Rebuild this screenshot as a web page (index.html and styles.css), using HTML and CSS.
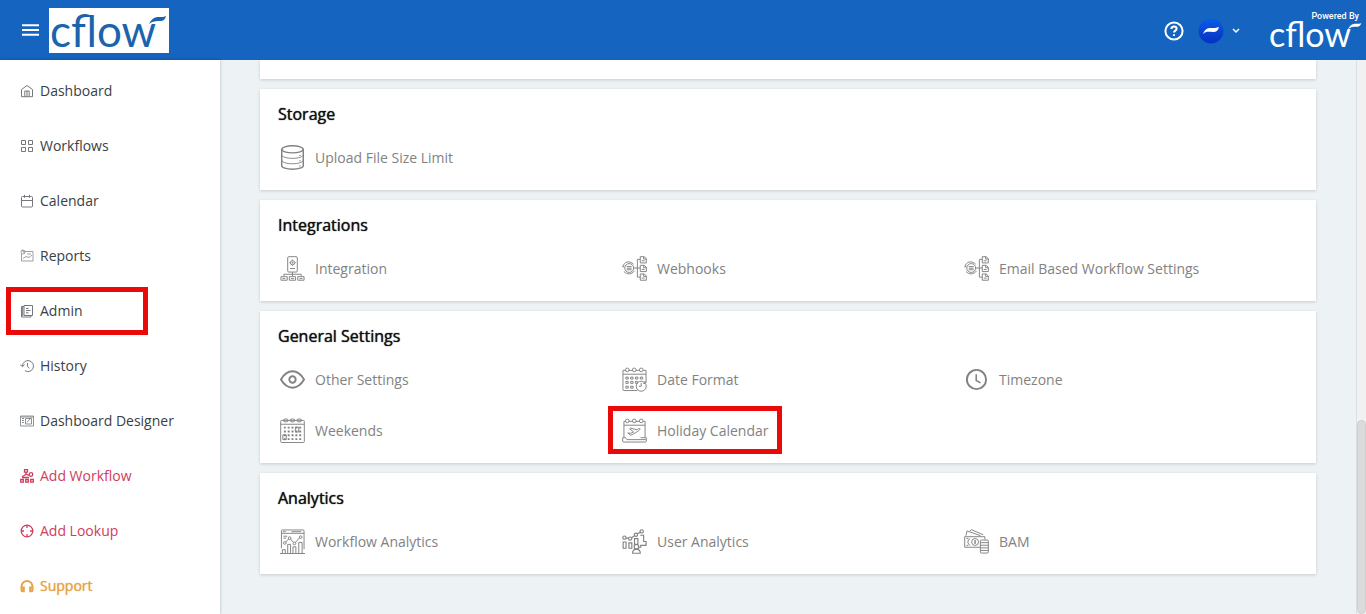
FILE: index.html
```html
<!DOCTYPE html>
<html lang="en">
<head>
<meta charset="utf-8">
<title>Cflow - Admin</title>
<meta name="viewport" content="width=device-width, initial-scale=1">
<link rel="stylesheet" href="styles.css">
</head>
<body>
<header class="topbar">
  <button class="icon-button" type="button" aria-label="Toggle menu">
    <svg class="menu-icon" viewBox="0 0 18 14"><path d="M0 2h18M0 7h18M0 12h18"/></svg>
  </button>
  <a class="brand" href="#"><span class="brand-word">cflow</span><svg class="brand-swoosh" viewBox="0 0 18 10"><path d="M0 9C3 3 6 2 10 2s5 0 7-1c-1 4-3 5-6 5-4 0-7 0-11 3z"/></svg></a>
  <div class="tools">
    <button class="icon-button" type="button" aria-label="Help">
      <svg class="help-icon" viewBox="0 0 20 20"><circle cx="10" cy="10" r="8.6"/><path d="M7.4 8c0-1.700 1.100-2.600 2.600-2.600s2.600.9 2.600 2.300c0 1.900-2.600 1.900-2.600 3.900M10 13.200v1.700"/></svg>
    </button>
    <button class="icon-button account" type="button" aria-label="Account">
      <svg class="avatar" viewBox="0 0 26 26"><defs><linearGradient id="disc" x1="0" y1="0" x2="0" y2="1"><stop offset="0" stop-color="#0a5ce8"/><stop offset="1" stop-color="#0530c0"/></linearGradient></defs><circle cx="13" cy="13" r="12.500" fill="url(#disc)"/><path fill="#fff" d="M5 16c2-5 4-6 8-6 3 0 5 0 8-1-1 4-3 5-6 5-4 0-7-1-10 2z"/></svg>
      <svg class="chevron" viewBox="0 0 8 6"><path stroke-width="1.500" d="M1 1l3 3 3-3"/></svg>
    </button>
  </div>
  <a class="powered" href="#"><span class="powered-label">Powered By</span><span class="powered-word">cflow</span><svg class="powered-swoosh" viewBox="0 0 18 10"><path d="M0 9C3 3 6 2 10 2s5 0 7-1c-1 4-3 5-6 5-4 0-7 0-11 3z"/></svg></a>
</header>

<div class="shell">
  <nav class="sidebar" aria-label="Main">
    <a class="nav-item" href="#"><svg class="nav-icon" viewBox="0 0 14 14"><path d="M1.500 5.500L7 1.500l5.500 4v7.200h-11zM4.800 12.700V7h4.400v5.700M7 7v5.700"/></svg>Dashboard</a>
    <a class="nav-item" href="#"><svg class="nav-icon" viewBox="0 0 14 14"><path d="M1.500 1.500h4v4h-4zM8.500 1.500h4v4h-4zM1.500 8.500h4v4h-4zM8.500 8.500h4v4h-4z"/></svg>Workflows</a>
    <a class="nav-item" href="#"><svg class="nav-icon" viewBox="0 0 14 14"><rect x="1.500" y="2.500" width="11" height="10.500" rx="1"/><path d="M1.500 6.500h11M4.500 .8v3M9.500 .8v3"/></svg>Calendar</a>
    <a class="nav-item" href="#"><svg class="nav-icon" viewBox="0 0 14 14"><g stroke-width=".7"><path d="M5 2.500h8v9.500H1.500V5"/><circle cx="3" cy="3" r="2"/><path d="M3 1v2h2M3 9.500l3-2 3 1 3-2.500M7 5h4"/></g></svg>Reports</a>
    <a class="nav-item marked" href="#"><svg class="nav-icon" viewBox="0 0 14 14"><path d="M4 1.500h8.500v10H4zM4 2.500H1.500v10.500h9.500v-1.500M2.700 3v9M6 4.500h2.500M6 6.500h4.500M6 8.800h2.500"/></svg>Admin</a>
    <a class="nav-item" href="#"><svg class="nav-icon" viewBox="0 0 14 14"><path d="M2.500 7A5.500 5.500 0 1 1 5 11.700M.3 5.800l2.200 1.800L4.600 5.600M7.500 4v3.400l2 2"/></svg>History</a>
    <a class="nav-item" href="#"><svg class="nav-icon" viewBox="0 0 14 14"><g stroke-width=".8"><path d="M.5 2h13v10H.5zM5.500 4.500h6v5.500h-6zM2 4.500h2M2 6.500h2M2 8.500h2M7 8.500l4-5M.5 3h13"/></g></svg>Dashboard Designer</a>
    <a class="nav-item add" href="#"><svg class="nav-icon" viewBox="0 0 14 14"><g stroke-width="1.300"><path d="M4.500.7h3v2.500h-3zM6 3.200v2L2 8M6 5l3 1.500"/><circle cx="11" cy="5.500" r="1.800"/><path d="M.7 10.500h2.600v2.600H.7zM5.700 10.500h2.600v2.600H5.700zM10.700 10.500h2.600v2.600h-2.600zM2 8.500h7"/></g></svg>Add Workflow</a>
    <a class="nav-item add" href="#"><svg class="nav-icon" viewBox="0 0 14 14"><g stroke-width="1.300"><circle cx="7" cy="7" r="5.800"/><path d="M7 1v3M7 10v3M1 7h3M10 7h3"/></g></svg>Add Lookup</a>
    <a class="nav-item support" href="#"><svg class="nav-icon heavy" viewBox="0 0 14 14"><path d="M1.500 11V7.500a5.500 5.500 0 0 1 11 0V11M1.500 8.500h2.300v3.800H2.500a1 1 0 0 1-1-1zM12.500 8.500h-2.300v3.800h1.300a1 1 0 0 0 1-1z"/></svg>Support</a>
  </nav>

  <main class="content">
    <section class="card card-tail" aria-hidden="true"></section>

    <section class="card">
      <h2 class="card-title">Storage</h2>
      <div class="options">
        <a class="option" href="#"><svg class="option-icon" viewBox="0 0 26 26"><g stroke-width="1.500"><ellipse cx="13" cy="4.500" rx="11.200" ry="3.700"/><path d="M1.800 4.500v17c0 2 5 3.700 11.200 3.700s11.200-1.700 11.200-3.700v-17"/></g><path d="M1.800 10.200c0 2 5 3.700 11.200 3.700s11.200-1.700 11.200-3.700M1.800 15.800c0 2 5 3.700 11.200 3.700s11.200-1.700 11.200-3.700M20 10.800h1.500M20 16.500h1.500M20 21.800h1.500"/></svg>Upload File Size Limit</a>
      </div>
    </section>

    <section class="card">
      <h2 class="card-title">Integrations</h2>
      <div class="options">
        <a class="option" href="#"><svg class="option-icon" viewBox="0 0 26 26"><rect x="8" y=".7" width="10" height="16" rx="1.200"/><circle cx="13" cy="7" r="2.200"/><circle cx="13" cy="7" r=".6"/><path d="M13 3.700v1M13 9.300v1M9.700 7h1M15.300 7h1M10.500 13h5M13 16.700v3M4 21v-2h18v2M13 19v2M1 21.500h6.500v3.700H1zM9.700 21.500h6.500v3.700H9.700zM18.500 21.500H25v3.700h-6.500zM2.500 23.500h3M11.500 23.500h3M20.300 23.500h3"/></svg>Integration</a>
        <a class="option" href="#"><svg class="option-icon" viewBox="0 0 26 26"><circle cx="7.500" cy="12.500" r="4.600"/><path d="M.8 11.500C2 5.500 8 4.500 12 8.500M2 16c3 3.500 8 3.500 11-.5M.8 11.500l1.700-1M5 11h5M5 12.700h5M5 14.300h5M12 12.500h7M19 3.500h-3v18.500h3"/><path d="M19 .7h4l2.300 2v4.500H19zM19 9.700h4l2.300 2v4.500H19zM19 18.700h4l2.300 2v4.500H19zM22.500.7v2.500h2.800M22.500 9.700v2.500h2.800M22.500 18.700v2.500h2.800M20.500 5h3M20.500 14h3M20.500 23h3"/></svg>Webhooks</a>
        <a class="option" href="#"><svg class="option-icon" viewBox="0 0 26 26"><circle cx="7.500" cy="12.500" r="4.600"/><path d="M.8 11.500C2 5.500 8 4.500 12 8.500M2 16c3 3.500 8 3.500 11-.5M.8 11.500l1.700-1M5 11h5M5 12.700h5M5 14.300h5M12 12.500h7M19 3.500h-3v18.500h3"/><path d="M19 .7h4l2.300 2v4.500H19zM19 9.700h4l2.300 2v4.500H19zM19 18.700h4l2.300 2v4.500H19zM22.500.7v2.500h2.800M22.500 9.700v2.500h2.800M22.500 18.700v2.500h2.800M20.500 5h3M20.500 14h3M20.500 23h3"/></svg>Email Based Workflow Settings</a>
      </div>
    </section>

    <section class="card">
      <h2 class="card-title">General Settings</h2>
      <div class="options">
        <a class="option" href="#"><svg class="option-icon bold" viewBox="0 0 26 26"><path d="M1 13C4.500 7 8.500 4.500 13 4.500S21.500 7 25 13c-3.500 6-7.500 8.500-12 8.500S4.500 19 1 13z"/><circle cx="13" cy="13" r="3.300"/></svg>Other Settings</a>
        <a class="option" href="#"><svg class="option-icon" viewBox="0 0 26 26"><path d="M16 24.500H2a1 1 0 0 1-1-1V3.500h3M7 3.500h4M14.500 3.500h4M22 3.500h3v13M1 7.500h24"/><circle cx="5.500" cy="3" r="1.900"/><circle cx="12.700" cy="3" r="1.900"/><circle cx="20" cy="3" r="1.900"/><path d="M4 10.500h2.500v2H4zM9 10.500h2.500v2H9zM14 10.500h2.500v2H14zM19 10.500h2.500v2H19zM4 15h2.500v2H4zM9 15h2.500v2H9zM4 20h2.500v2H4zM9 20h2.500v2H9zM14 15h2v2h-2z"/><circle cx="20" cy="20" r="5.200"/><path d="M20 16.500V20h-2.500M24 14.500v2.500h-2"/></svg>Date Format</a>
        <a class="option" href="#"><svg class="option-icon bold" viewBox="0 0 26 26"><circle cx="13" cy="13" r="10"/><path stroke-width="1.600" d="M12.700 7.500V14l4.500 2.500"/></svg>Timezone</a>
        <a class="option" href="#"><svg class="option-icon" viewBox="0 0 26 26"><rect x=".7" y="2.500" width="24.600" height="23" rx="1"/><path d="M.7 6.500h24.600"/><ellipse cx="6" cy="2.500" rx="2.500" ry="1.600"/><ellipse cx="13" cy="2.500" rx="2.500" ry="1.600"/><ellipse cx="20" cy="2.500" rx="2.500" ry="1.600"/><g class="dots"><path d="M4 10h18M4 14h18M4 18h18M4 22h18"/></g><path d="M16 9.500h3.500v5H16zM3 17.500h3.500v5H3z"/></svg>Weekends</a>
        <a class="option marked" href="#"><svg class="option-icon" viewBox="0 0 26 26"><path d="M2 20V3.500h2M7 3.500h4M14.500 3.500h4M22 3.500h2V20M2 7.500h22M.7 20.500h3l1.500 2h19.500M.7 20.500v3.500a1 1 0 0 0 1 1h22.600a1 1 0 0 0 1-1v-3.500h-6"/><circle cx="5.500" cy="3" r="1.900"/><circle cx="12.700" cy="3" r="1.900"/><circle cx="20" cy="3" r="1.900"/><path d="M6 15.500l3 2.500c4-2 8-4 10-6.500-1-1-2-.5-3.500.8L9 10.500l-1 .7 4 3.300-3 1.500z"/></svg>Holiday Calendar</a>
      </div>
    </section>

    <section class="card">
      <h2 class="card-title">Analytics</h2>
      <div class="options">
        <a class="option" href="#"><svg class="option-icon" viewBox="0 0 26 26"><path d="M1.500 20V2a1 1 0 0 1 1-1h21.500a1 1 0 0 1 1 1v19M1.500 4.500H25M3 2.800h3M12 2.800h10M3.500 7.500h4M3.500 9.500h3M0 25.500h26M2.500 25.500v-4h3v4M8 25.500V16h3v9.500M13.500 25.500v-7h3v7M19.500 25.500V14h3.500v11.500"/><path d="M6 13.500l3-3M11 10.500l3 3.500M16 14l4.500-5"/><circle cx="5" cy="14.500" r="1.400"/><circle cx="10" cy="9.500" r="1.400"/><circle cx="15" cy="15" r="1.400"/><circle cx="21.500" cy="8.500" r="1.400"/></svg>Workflow Analytics</a>
        <a class="option" href="#"><svg class="option-icon" viewBox="0 0 26 26"><g stroke-width="1.200"><circle cx="2.500" cy="9" r="1.700"/><circle cx="8.500" cy="10" r="1.700"/><circle cx="14.500" cy="6" r="1.700"/><circle cx="20.500" cy="2.500" r="1.700"/><path d="M4.200 9.300l2.600.4M10 9l3-2M16 5l3-1.700M1.200 13.500h3V20h-3zM7.200 14.500h3V20h-3zM13 10h3.500v6H13zM19 6.500h3.500V13H25v4h-5.500v2h-2"/><circle cx="15" cy="18.500" r="2.400"/><path d="M11 25.200c0-3 1.500-4.300 4-4.300s4 1.300 4 4.300z"/></g></svg>User Analytics</a>
        <a class="option" href="#"><svg class="option-icon" viewBox="0 0 26 26"><path d="M2 7l1.200-5 14 5M6 2.500L7.500.6 20 6M16.500 19H.7V8h21v3M2.500 10h2M2.500 17h2"/><path d="M6.500 10a3.700 3.700 0 0 0 0 7"/><circle cx="11.500" cy="13.500" r="3.600"/><path d="M11.500 11.500v4M10.500 12.500h2M10.500 14.500h2"/><rect x="17" y="11.500" width="8.300" height="13.500" rx="1"/><path d="M17 14.200h8.300M17 16.900h8.300M17 19.600h8.300M17 22.300h8.300"/></svg>BAM</a>
      </div>
    </section>
  </main>

  <div class="scroll-track" aria-hidden="true"><div class="scroll-thumb"></div></div>
</div>
</body>
</html>
```
FILE: styles.css
```css
*,
*::before,
*::after {
  box-sizing: border-box;
}

body {
  margin: 0;
  height: 100vh;
  display: flex;
  flex-direction: column;
  overflow: hidden;
  background: #edf2f5;
  font-family: "Open Sans", "Noto Sans", sans-serif;
  font-size: 14px;
  color: #3a4046;
}

a {
  color: inherit;
  text-decoration: none;
}

svg {
  display: block;
  flex: none;
  fill: none;
  stroke: currentColor;
}

/* Top bar */
.topbar {
  flex: none;
  display: flex;
  align-items: center;
  height: 60px;
  padding: 0 4px 0 22px;
  background: #1565c0;
  color: #fff;
}

.icon-button {
  display: flex;
  align-items: center;
  padding: 0;
  border: 0;
  background: none;
  color: inherit;
  cursor: pointer;
}

.menu-icon {
  width: 17px;
  height: 14px;
  stroke-width: 2;
}

.brand {
  position: relative;
  width: 120px;
  height: 45px;
  margin-left: 10px;
  padding-left: 1px;
  background: #fff;
  color: #1b63ad;
}

.brand-word {
  font: 44px/44px Lato, sans-serif;
}

.brand-swoosh {
  position: absolute;
  top: 7px;
  right: 2px;
  width: 18px;
  height: 10px;
  fill: currentColor;
  stroke: none;
}

.tools {
  display: flex;
  align-items: center;
  gap: 14px;
  margin-left: auto;
  padding-top: 2px;
}

.help-icon {
  width: 20px;
  height: 20px;
  stroke-width: 2;
}

.account {
  gap: 8px;
}

.avatar {
  width: 26px;
  height: 26px;
  stroke: none;
}

.chevron {
  width: 8px;
  height: 6px;
}

.powered {
  position: relative;
  display: flex;
  flex-direction: column;
  width: 93px;
  margin-left: 29px;
  padding-bottom: 2px;
}

.powered-label {
  padding-right: 3px;
  font: 500 9px/10px Roboto, sans-serif;
  text-align: right;
}

.powered-word {
  font: 34px/26px Lato, sans-serif;
}

.powered-swoosh {
  position: absolute;
  top: 11px;
  right: 0;
  width: 14px;
  height: 8px;
  fill: currentColor;
  stroke: none;
}

/* Page body */
.shell {
  flex: 1;
  display: flex;
  min-height: 0;
}

.sidebar {
  flex: none;
  width: 220px;
  padding-top: 3px;
  background: #fff;
  box-shadow: 0 0 3px rgba(0, 0, 0, 0.25);
}

.nav-item {
  position: relative;
  display: flex;
  align-items: center;
  gap: 6px;
  height: 55px;
  padding-left: 20px;
}

.nav-icon {
  width: 14px;
  height: 14px;
  color: #74787c;
}

.nav-icon.heavy {
  stroke-width: 2;
}

.add,
.add .nav-icon {
  color: #d13c5c;
}

.support,
.support .nav-icon {
  color: #e6a34a;
}

.support {
  text-shadow: 0 0 1px currentColor;
}

/* Highlight frame around an entry */
.marked::after {
  content: "";
  position: absolute;
  border: 5px solid #ea0a0a;
}

.nav-item.marked::after {
  top: 4px;
  bottom: 3px;
  left: 6px;
  width: 142px;
}

.option.marked::after {
  inset: 1px -14px 2px -14px;
}

.content {
  flex: 1;
  display: flex;
  flex-direction: column;
  gap: 10px;
  min-width: 0;
  padding: 0 40px;
}

.card {
  padding: 10px 18px 7px;
  background: #fff;
  box-shadow: 0 1px 3px rgba(0, 0, 0, 0.16);
}

.card-tail {
  flex: none;
  height: 19px;
  padding: 0;
}

.card-title {
  margin: 0 0 3px;
  font-size: 16px;
  font-weight: 400;
  line-height: 30px;
  color: #111;
  text-shadow: 0 0 1px currentColor;
}

.options {
  display: grid;
  grid-template-columns: repeat(3, 1fr);
  column-gap: 6px;
  padding-left: 2px;
  margin-right: -2px;
}

.option {
  position: relative;
  justify-self: start;
  display: flex;
  align-items: center;
  gap: 10px;
  height: 51px;
  color: #828282;
}

.option-icon {
  width: 25px;
  height: 25px;
}

.option-icon.bold {
  stroke-width: 2;
}

.dots {
  stroke-width: 2;
  stroke-dasharray: 2 2;
}

/* Scroll indicator */
.scroll-track {
  flex: none;
  display: flex;
  flex-direction: column;
  justify-content: flex-end;
  width: 10px;
  border-left: 1px solid #dcdfe1;
  background: #f1f1f1;
}

.scroll-thumb {
  height: 35%;
  border: 1px solid #cfcfcf;
  border-radius: 5px;
  background: #dbdbdb;
}
```
